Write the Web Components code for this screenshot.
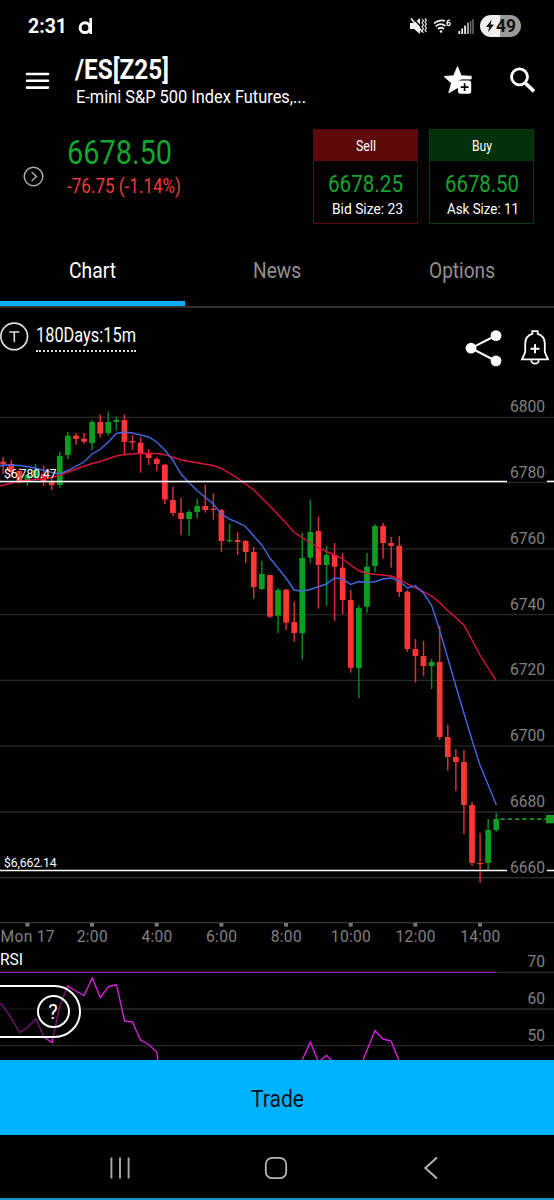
<!DOCTYPE html>
<html lang="en">
<head>
<meta charset="utf-8">
<title>/ES[Z25]</title>
<style>
  html, body { margin: 0; background: #000; }
  body { width: 554px; height: 1200px; overflow: hidden; color: #fff; font-family: Roboto, "Liberation Sans", sans-serif; }
</style>
</head>
<body>
<trading-app></trading-app>

<script>
// Shared helper: attaches an open shadow root filled from a template string
class BaseElement extends HTMLElement {
  constructor() {
    super();
    const template = document.createElement("template");
    template.innerHTML = this.constructor.markup;
    this.attachShadow({ mode: "open" }).appendChild(template.content.cloneNode(true));
  }
}

/**
 * <fit-text w="100" size="18" lh="24"> - one line of text, condensed to the width w.
 */
customElements.define("fit-text", class FitText extends BaseElement {
  static markup = `
    <style>
      :host { display: block; white-space: nowrap; flex: none; }
      span { display: inline-block; transform-origin: 0 50%; vertical-align: top; }
    </style>
    <span><slot></slot></span>`;
  connectedCallback() {
    const span = this.shadowRoot.querySelector("span");
    const w = Number(this.getAttribute("w"));
    const lh = this.getAttribute("lh") + "px";
    this.style.width = w + "px";
    this.style.height = lh;
    span.style.fontSize = this.getAttribute("size") + "px";
    span.style.lineHeight = lh;
    span.style.transform = `scaleX(${w / span.getBoundingClientRect().width})`;
  }
});

customElements.define("status-bar", class StatusBar extends BaseElement {
  static markup = `
    <style>
      :host { display: flex; align-items: center; height: 52px; padding: 0 33px 0 28px; box-sizing: border-box; font-weight: 700; }
      svg { display: block; flex: none; }
      .logo { margin-left: 11px; }
      .right { margin-left: auto; display: flex; align-items: center; }
      .battery { display: flex; align-items: center; justify-content: center; gap: 1px; width: 41px; height: 22px; margin-left: 6px;
        border-radius: 11px; background: linear-gradient(90deg, #efefef 49%, #9b9b9b 49%); color: #111; }
    </style>
    <fit-text w="39" size="20.5" lh="24">2:31</fit-text>
    <svg class="logo" width="16" height="20" viewBox="0 0 16 20"><circle cx="7" cy="11.7" r="4.9" fill="none" stroke="#fff" stroke-width="3"/><path d="M12.7 2V18" stroke="#fff" stroke-width="2.6"/></svg>
    <div class="right">
      <svg width="17" height="18" viewBox="0 0 17 18">
        <path d="M0 6h4l6-5v16l-6-5H0z" fill="#eee"/>
        <path d="M2.2 0l12 13.5" stroke="#000" stroke-width="1.4"/>
        <path d="M1 1.5l11.5 13.5" stroke="#eee" stroke-width="1.7"/>
        <path d="M12 2.2l1.5 1.6-1.5 2 1.5 2-1.5 2 1.5 2-1.5 2 1.5 2M15 1.2l1.4 2-1.4 2 1.4 2-1.4 2 1.4 2-1.4 2 1.4 2" fill="none" stroke="#ddd" stroke-width="1.2"/>
      </svg>
      <svg width="19" height="16" viewBox="0 0 19 16" style="margin-left:6px">
        <path d="M1 5.3Q6.5 1 12 3M2.7 8.3q5-4 9.8-.3M5 11q3-2.5 6 0" fill="none" stroke="#eee" stroke-width="1.7"/>
        <circle cx="8" cy="13.5" r="1.3" fill="#eee"/>
        <path d="M17.2 2.5q-2.6-1.4-3 2v1.2" fill="none" stroke="#eee" stroke-width="1.4"/><circle cx="15.6" cy="5.9" r="1.6" fill="none" stroke="#eee" stroke-width="1.3"/>
      </svg>
      <svg width="16" height="17" viewBox="0 0 16 17" style="margin-left:6px">
        <path d="M1.3 13v3M4.2 10.5V16M7.1 7.5V16" stroke="#eee" stroke-width="1.8"/><path d="M10 4.7V16M12.6 3V16M15 1V16" stroke="#666" stroke-width="1.6"/><path d="M10 4.7V16" stroke="#bbb" stroke-width="1.4"/>
      </svg>
      <div class="battery">
        <svg width="10" height="14" viewBox="0 0 10 14"><path d="M6.6.8L1 8h3.2L3 13.2 9 5.6H5.6z" fill="#111"/></svg>
        <fit-text w="20" size="17.5" lh="22">49</fit-text>
      </div>
    </div>`;
});

customElements.define("app-header", class AppHeader extends BaseElement {
  static markup = `
    <style>
      :host { display: flex; height: 63px; padding: 3px 18.5px 0 25px; box-sizing: border-box; }
      svg { display: block; flex: none; }
      .menu { margin: 16px 25px 0 0; }
      .title { font-weight: 700; }
      .actions { margin-left: auto; display: flex; gap: 35.5px; padding-top: 10px; }
      .sub { padding-left: 1px; }
    </style>
    <svg class="menu" width="25" height="19" viewBox="0 0 25 19"><path d="M2 3h21M2 9.8h21M2 16.6h21" stroke="#fff" stroke-width="2.6" stroke-linecap="round"/></svg>
    <div>
      <fit-text class="title" w="94" size="28" lh="30">/ES[Z25]</fit-text>
      <fit-text class="sub" w="230" size="19" lh="24">E-mini S&amp;P 500 Index Futures,...</fit-text>
    </div>
    <div class="actions">
      <svg width="30" height="31" viewBox="0 0 30 31">
        <path d="M14.5 1.5l3.7 9.2 10 .5V14H19q-4 0-4 4v4.5L5.8 27.8l2.7-9.8L1 11.5l9.6-.8z" fill="#fff" stroke="#fff" stroke-linejoin="round" stroke-width=".8"/>
        <rect x="15" y="15.6" width="13.2" height="13.2" rx="2.4" fill="#fff"/><path d="M21.6 18.3v7.8M17.7 22.2h7.8" stroke="#000" stroke-width="1.7"/>
      </svg>
      <svg width="27" height="29" viewBox="0 0 27 29"><circle cx="10.5" cy="11.8" r="8" fill="none" stroke="#fff" stroke-width="2.8"/><path d="M16 17.8l9 8.6" stroke="#fff" stroke-width="3.6"/></svg>
    </div>`;
});

/** <quote-box side="sell|buy"> - label, price and size of one side of the book. */
customElements.define("quote-box", class QuoteBox extends BaseElement {
  static markup = `
    <style>
      :host { display: block; width: 105px; height: 95px; box-sizing: border-box; border: 1px solid #560b0c; }
      :host([side="buy"]) { border-color: #063b10; }
      .head { display: flex; justify-content: center; height: 31px; padding-top: 6px; box-sizing: border-box; background: #5e090a; }
      :host([side="buy"]) .head { background: #02310a; }
      .body { display: flex; flex-direction: column; align-items: flex-end; padding: 8px 14px 0 0; }
    </style>
    <div class="head"><slot name="label"></slot></div>
    <div class="body"><slot></slot></div>`;
});

customElements.define("quote-panel", class QuotePanel extends BaseElement {
  static markup = `
    <style>
      :host { display: flex; height: 126px; padding: 14px 20px 0 22px; box-sizing: border-box; }
      .expand { margin: 36px 22px 0 0; }
      svg { display: block; flex: none; }
      .last { padding-top: 3px; }
      .boxes { margin-left: auto; display: flex; gap: 11px; }
      .up { color: #15a52c; }
      .down { color: #f0383f; }
    </style>
    <svg class="expand" width="23" height="23" viewBox="0 0 23 23"><circle cx="11.5" cy="11.5" r="9.3" fill="none" stroke="#aaa" stroke-width="1.5"/><path d="M9.7 7l4.7 4.5L9.7 16" fill="none" stroke="#aaa" stroke-width="1.5"/></svg>
    <div class="last">
      <fit-text class="up" w="105" size="34" lh="40">6678.50</fit-text>
      <fit-text class="down" w="114" size="19.5" lh="29">-76.75 (-1.14%)</fit-text>
    </div>
    <div class="boxes">
      <quote-box side="sell">
        <fit-text slot="label" w="20" size="14.2" lh="20">Sell</fit-text>
        <fit-text class="up" w="75" size="24" lh="30">6678.25</fit-text>
        <fit-text w="71" size="15.5" lh="20">Bid Size: 23</fit-text>
      </quote-box>
      <quote-box side="buy">
        <fit-text slot="label" w="20" size="14.2" lh="20">Buy</fit-text>
        <fit-text class="up" w="74" size="24" lh="30">6678.50</fit-text>
        <fit-text w="72" size="15.5" lh="20">Ask Size: 11</fit-text>
      </quote-box>
    </div>`;
});

customElements.define("tab-bar", class TabBar extends BaseElement {
  static markup = `
    <style>
      :host { display: grid; grid-template-columns: 185px 184px 185px; height: 67px; box-sizing: border-box; border-bottom: 2px solid #303030; color: #909090; }
      div { display: flex; justify-content: center; padding-top: 15px; height: 65px; box-sizing: border-box; }
      .on { color: #fff; border-bottom: 5px solid #08aefc; }
    </style>
    <div class="on"><fit-text w="47" size="21.8" lh="30">Chart</fit-text></div>
    <div><fit-text w="48" size="21.8" lh="30">News</fit-text></div>
    <div><fit-text w="66" size="21.8" lh="30">Options</fit-text></div>`;
});

customElements.define("chart-toolbar", class ChartToolbar extends BaseElement {
  static markup = `
    <style>
      :host { display: flex; height: 76px; padding: 14px 4px 0 0; box-sizing: border-box; }
      svg { display: block; flex: none; }
      .range { margin-left: 7px; height: 30px; border-bottom: 2px dotted #ddd; box-sizing: border-box; }
      .actions { margin-left: auto; display: flex; gap: 17px; padding-top: 6px; }
    </style>
    <svg width="29" height="29" viewBox="0 0 29 29"><circle cx="14.2" cy="14.4" r="13.3" fill="none" stroke="#ddd" stroke-width="1.7"/><path d="M9.3 10h10M14.3 10v10" stroke="#ddd" stroke-width="1.6"/></svg>
    <div class="range"><fit-text w="100" size="19.3" lh="27">180Days:15m</fit-text></div>
    <div class="actions">
      <svg width="38" height="40" viewBox="0 0 38 40"><path d="M31 7.5L6 20.2 31 33" fill="none" stroke="#fff" stroke-width="2"/><g fill="#fff"><circle cx="6" cy="20.2" r="5.4"/><circle cx="31" cy="7.6" r="5.4"/><circle cx="31" cy="32.9" r="5.4"/></g></svg>
      <svg width="30" height="40" viewBox="0 0 30 40">
        <path d="M12.3 5.8V3.2h5.4v2.6Q24.8 8 24.8 15.5V24l3.2 7.3H2L5.2 24v-8.5Q5.2 8 12.3 5.8z" fill="none" stroke="#fff" stroke-width="1.8"/>
        <path d="M11.3 32.2a3.7 3.4 0 0 0 7.4 0" fill="none" stroke="#fff" stroke-width="1.8"/>
        <path d="M15 16.2v9M10.5 20.7h9" stroke="#fff" stroke-width="2"/>
      </svg>
    </div>`;
});

// One candle per 15 minutes: kind, then screen heights of body top, body bottom, high, low
const FIRST = -3;
const CANDLES = `
r 461.7 464.5 457 474|r 464 472 460 477|r 471 481 468 483.5|g 475 482 474 486|g 470 478 464 480
r 474 481.5 466 486|r 481.5 485 478 490|g 456 485 452 488|g 435.7 455 432 459|r 435.7 439 433 445
r 438.7 441.7 433 443.7|g 422 443 420 450|r 422 433.7 414.5 437.5|g 422 433 411.7 435.5|g 420 422 416.5 431
r 420 442 414.5 455|r 441 442.5 435 450|r 442.7 453.5 437 472.7|r 453.5 458 449 465|r 459 464 457 471
r 464.7 499.5 464 504|r 500 513 486.7 516|r 512.7 519 498 535|g 512 519 510 535.7|g 506 512 498.7 518
r 506 510 484.7 512.7|r 508.7 510 493.5 519.7|r 510 541 509 552|g 540 541 524 542.7|r 540 542 532 555
r 541 552 540 563|r 552 587 547 598.7|g 574 589 561 590|r 575 616.7 574.7 618|g 590 615.7 588 633
r 589.7 622.7 589 630|r 622 633 601.7 642|g 558 633 533 659.7|g 532 557.7 499.7 563|r 531 565 516.7 608.7
g 554.7 565 546 606|r 555 566.7 543 621|r 567.7 600 553 614|r 600 667.7 590 672.7|g 608 668 605 698
g 566.7 606.7 553 612.7|g 526 566 524 572|r 526 543 523 558.7|r 543 546 537 567.7|r 545.7 592 536 597
r 591.7 649 590 652|r 649 656 639 682.7|r 656 666 641 676|g 662 666 659 689|r 662 737 626 740
r 737 757 724.7 770.7|r 757 762 749 791|r 762 805 750 834|r 805 863 802 866|r 863 864 833 883
g 830 863 819 870|g 819 830 813 831.7`.trim().split(/[|\n]/).map((row) => row.split(" "));

const FAST = "0,466 6,465 20,465.5 35,468 50,472 59.8,474 67.8,470.5 84,462 92,454 100.1,449.5 108.2,442 116.3,433.5 124.4,432 132.5,433 140.6,435 148.6,437 156.7,442 164.8,450 173,460.5 181,474 189,482.5 197.1,490.5 213.3,504 221.4,514 229.4,519 237.5,522.3 245.6,526.5 253.7,536 261.8,545 269.9,558 286,578 294.1,590 302.2,591.2 310.3,589.5 326.4,584 334.5,578 342.6,579 350.7,584.5 358.8,581.5 366.9,582.5 375,581.7 383,579 391.1,578 399.2,581 407.3,588 415.4,585.7 423.4,593 431.5,605 439.6,630 457,690 472,740 480,765 496.4,805";
const SLOW = "0,486 20,481 35,479.5 50,478 60,475 76,469 92,463.5 100,461.5 116.3,456 124.4,454.5 140.6,453.3 156.7,453.5 164.8,454.7 181,460 197,462.7 213,465.5 221.4,468.5 237.5,478 253.7,490 269.9,506 286,523 294.1,532.5 310.3,542.5 318.4,548 334.5,555 342.6,558.5 350.7,565 358.8,570.5 366.9,573.5 391.1,576 399.2,579 407.3,584 423.4,591.5 431.5,596 439.6,602.5 447.7,610.5 463.9,625 480,655 496,680.5";
const RSI = "0,1003.5 3.2,1006 11.3,1018 19.5,1032.5 27.5,1027.5 36,1019 44,1037 52,1042.5 59.5,1007 67.5,986 75.9,991 84,995.5 92.3,978 100.3,997.5 108.5,986.7 116.5,984.7 124.5,1021 132.5,1022 140.5,1040 148.6,1044.5 156.7,1052 160,1076 294,1078 302.2,1060 310.3,1042 318.4,1062 326.4,1055.5 334.5,1063 350,1084 363,1060 375,1030.5 383,1039 391.1,1041 399.2,1061 410,1084";

customElements.define("price-chart", class PriceChart extends BaseElement {
  static markup = `
    <style>
      :host { display: block; width: 554px; height: 676px; position: relative; overflow: hidden; }
      svg { display: block; }
      .axis { font-size: 15.6px; fill: #808080; }
      .level { font-size: 12.2px; fill: #fff; }
      .help { position: absolute; left: -4px; top: 601px; width: 84.5px; height: 53px; box-sizing: border-box; padding-right: 9px;
        border: 2px solid #fff; border-radius: 0 27px 27px 0; background: rgba(0, 0, 0, .45); display: flex; align-items: center; justify-content: flex-end; }
      .help span { width: 33px; height: 33px; box-sizing: border-box; border: 2px solid #fff; border-radius: 50%; font: 400 20px/30px Roboto, sans-serif; text-align: center; }
    </style>
    <svg width="554" height="676" viewBox="0 384 554 676"></svg>
    <div class="help"><span>?</span></div>`;

  connectedCallback() {
    const slotX = (i) => 27.4 + 8.083 * i;
    const out = [];
    const line = (x1, x2, y, color, width) => out.push(`<path d="M${x1} ${y}H${x2}" stroke="${color}" stroke-width="${width}"/>`);
    const prices = [6800, 6780, 6760, 6740, 6720, 6700, 6680, 6660];
    const gridY = (i) => 417.3 + 65.78 * i;

    // the 6780 grid line is hidden under the upper price level
    prices.forEach((p, i) => p !== 6780 && line(0, 554, gridY(i), "#292929", 1.3));
    line(0, 554, 482.3, "#292929", 1.3);
    [972.4, 1009, 1045.6].forEach((y) => line(0, 554, y, "#292929", 1.3));
    line(0, 554, 922.6, "#383838", 1.4);

    CANDLES.forEach(([kind, top, bottom, high, low], i) => {
      const x = slotX(i + FIRST);
      const color = kind === "g" ? "#0b9f22" : "#ff3636";
      const h = Math.max(bottom - top, 1.2);
      out.push(`<g fill="${color}"><rect x="${x - 0.7}" y="${high}" width="1.5" height="${low - high}" opacity=".85"/><rect x="${x - 2.8}" y="${top}" width="5.7" height="${h}"/></g>`);
    });

    out.push(`<polyline points="${SLOW}" fill="none" stroke="#dc143c" stroke-width="1.4"/>`);
    out.push(`<polyline points="${FAST}" fill="none" stroke="#4169e1" stroke-width="1.4"/>`);

    // horizontal levels, broken where the price labels stand
    [481.4, 870.5].forEach((y) => { line(0, 507, y, "#fff", 1.5); line(547, 554, y, "#fff", 1.5); });
    out.push(`<text class="level" x="4" y="477.5" textLength="52.5">$6,780.47</text>`);
    out.push(`<text class="level" x="4" y="866.7" textLength="52.5">$6,662.14</text>`);

    out.push(`<path d="M500.5 819.2H546" stroke="#169a22" stroke-width="1.8" stroke-dasharray="4.3 3"/><rect x="546" y="815" width="8" height="8.3" fill="#169a22"/>`);

    prices.forEach((p, i) => out.push(`<text class="axis" x="545" y="${gridY(i) - 5}" text-anchor="end">${p}</text>`));
    ["70", "60", "50"].forEach((t, i) => out.push(`<text class="axis" x="545" y="${967.3 + 36.6 * i}" text-anchor="end">${t}</text>`));
    ["Mon 17", "2:00", "4:00", "6:00", "8:00", "10:00", "12:00", "14:00"].forEach((t, i) => {
      const x = slotX(i * 8);
      out.push(`<rect x="${x - 2}" y="923" width="4" height="3.6" fill="#777"/><text class="axis" x="${x + 0.3}" y="941.8" text-anchor="middle" letter-spacing=".3">${t}</text>`);
    });

    out.push(`<text x="0" y="964.8" font-size="16" fill="#fff" textLength="23" lengthAdjust="spacingAndGlyphs">RSI</text>`);
    line(0, 496.5, 972.4, "#8a23a8", 1.4);
    out.push(`<polyline points="${RSI}" fill="none" stroke="#d321d9" stroke-width="1.4"/>`);
    this.shadowRoot.querySelector("svg").innerHTML = out.join("");
  }
});

customElements.define("trade-button", class TradeButton extends BaseElement {
  static markup = `
    <style>
      :host { display: flex; justify-content: center; height: 75px; padding-top: 22px; box-sizing: border-box; background: #00b3ff; color: #06121a; }
    </style>
    <slot></slot>`;
});

customElements.define("system-nav", class SystemNav extends BaseElement {
  static markup = `
    <style>
      :host { display: grid; grid-template-columns: repeat(3, 155.5px); justify-content: center; justify-items: center; padding-right: 3px; height: 65px; box-sizing: border-box; align-items: center; border-bottom: 2px solid #168fc5; }
      svg { display: block; margin-top: 2px; }
    </style>
    <svg width="22" height="24" viewBox="0 0 22 24"><path d="M2.4 1.5v21M11 1.5v21M19.6 1.5v21" stroke="#aaa" stroke-width="1.9"/></svg>
    <svg width="24" height="24" viewBox="0 0 24 24"><rect x="1.8" y="1.8" width="20.4" height="20.4" rx="6.5" fill="none" stroke="#b5b5b5" stroke-width="1.8"/></svg>
    <svg width="16" height="24" viewBox="0 0 16 24"><path d="M14 1.5L2.3 12 14 22.5" fill="none" stroke="#b5b5b5" stroke-width="1.9"/></svg>`;
});

customElements.define("trading-app", class TradingApp extends BaseElement {
  static markup = `
    <style>
      :host { display: flex; flex-direction: column; width: 554px; height: 1200px; background: #000; }
    </style>
    <status-bar></status-bar>
    <app-header></app-header>
    <quote-panel></quote-panel>
    <tab-bar></tab-bar>
    <chart-toolbar></chart-toolbar>
    <price-chart></price-chart>
    <trade-button><fit-text w="53" size="24.2" lh="34">Trade</fit-text></trade-button>
    <system-nav></system-nav>`;
});
</script>
</body>
</html>
